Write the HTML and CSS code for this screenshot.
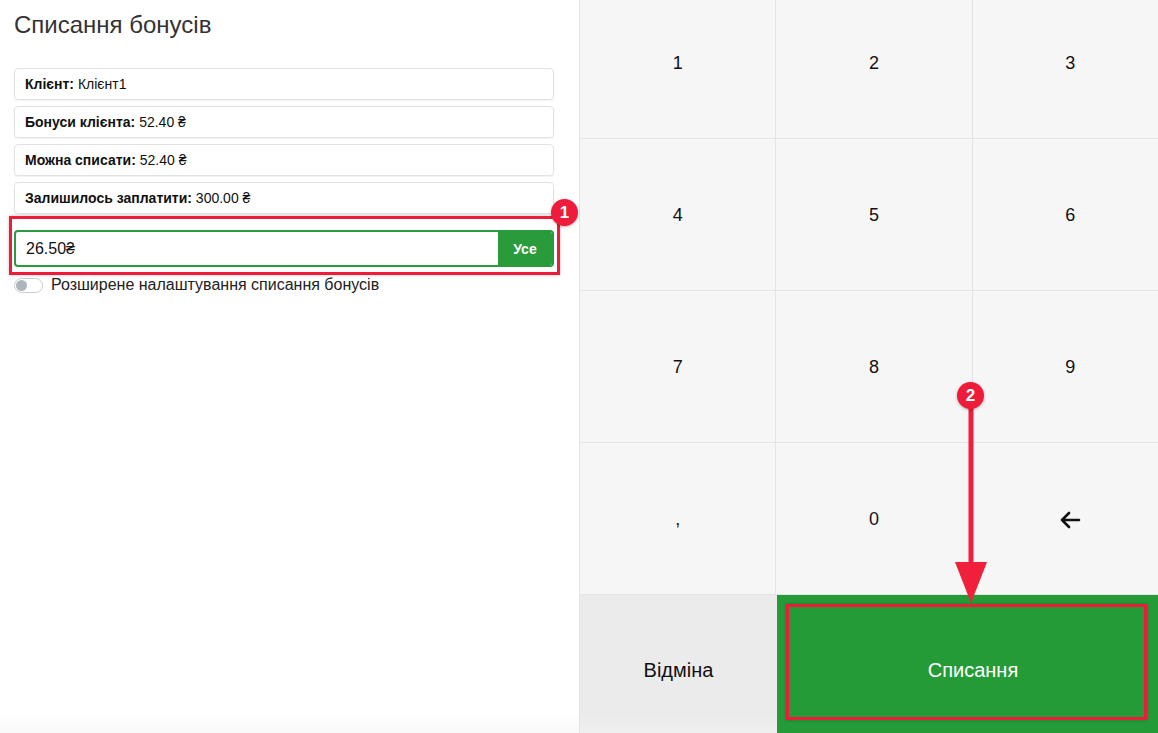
FILE: index.html
```html
<!DOCTYPE html>
<html lang="uk">
<head>
<meta charset="utf-8">
<title>Списання бонусів</title>
<link rel="stylesheet" href="styles.css">
</head>
<body>
<div class="app">
  <section class="left">
    <h1 class="title">Списання бонусів</h1>
    <div class="info-list">
      <div class="info"><b>Клієнт:</b> Клієнт1</div>
      <div class="info"><b>Бонуси клієнта:</b> 52.40 ₴</div>
      <div class="info"><b>Можна списати:</b> 52.40 ₴</div>
      <div class="info"><b>Залишилось заплатити:</b> 300.00 ₴</div>
    </div>
    <div class="input-group">
      <div class="input">26.50₴</div>
      <button class="all-btn">Усе</button>
    </div>
    <label class="switch-row">
      <span class="switch"><span class="knob"></span></span>
      <span class="switch-label">Розширене налаштування списання бонусів</span>
    </label>
  </section>
  <section class="right">
    <div class="keypad">
      <div class="key">1</div><div class="key">2</div><div class="key">3</div>
      <div class="key">4</div><div class="key">5</div><div class="key">6</div>
      <div class="key">7</div><div class="key">8</div><div class="key">9</div>
      <div class="key">,</div><div class="key">0</div>
      <div class="key"><svg width="22" height="18" viewBox="0 0 22 18"><path d="M20 9H3M10 2L3 9l7 7" fill="none" stroke="#111" stroke-width="2.6" stroke-linecap="round" stroke-linejoin="round"/></svg></div>
    </div>
    <div class="actions">
      <button class="cancel">Відміна</button>
      <button class="confirm">Списання</button>
    </div>
  </section>

  <div class="mark mark-input"></div>
  <div class="badge badge-1">1</div>
  <div class="mark mark-confirm"></div>
  <svg class="arrow" width="40" height="220" viewBox="0 0 40 220">
    <path d="M20 10V170" stroke="#f0203a" stroke-width="5" stroke-linecap="round"/>
    <path d="M4 166H36L20 207Z" fill="#f0203a"/>
  </svg>
  <div class="badge badge-2">2</div>
</div>
</body>
</html>
```
FILE: styles.css
```css
html, body {
  margin: 0;
  padding: 0;
  height: 100%;
  overflow: hidden;
  background: #fff;
  font-family: "Liberation Sans", Arial, Helvetica, sans-serif;
}

.app {
  position: relative;
  display: flex;
  width: 1158px;
  height: 733px;
  overflow: hidden;
}

.left {
  width: 540px;
  flex: none;
  padding: 12px 25px 0 14px;
  border-right: 1px solid #e4e4e4;
  background: linear-gradient(to bottom, #fff 0, #fff 715px, #f8f8f8 733px);
}

.title {
  margin: 0;
  font-size: 24px;
  line-height: 26px;
  font-weight: normal;
  color: #333;
}

.info-list {
  margin-top: 30px;
  display: flex;
  flex-direction: column;
  gap: 6px;
}

.info {
  height: 30px;
  line-height: 30px;
  padding: 0 10px;
  border: 1px solid #e2e2e2;
  border-radius: 4px;
  box-shadow: 0 1px 2px rgba(0,0,0,0.06);
  font-size: 14px;
  color: #111;
}

.info b {
  font-weight: bold;
}

.input-group {
  margin-top: 16px;
  display: flex;
  height: 37px;
  box-sizing: border-box;
  border: 2px solid #2a9b3b;
  border-radius: 4px;
  overflow: hidden;
}

.input {
  flex: 1;
  padding-left: 10px;
  line-height: 33px;
  font-size: 16px;
  color: #111;
}

.all-btn {
  width: 54px;
  border: 0;
  margin: 0;
  background: #2a9b3b;
  color: #fff;
  font-family: inherit;
  font-weight: bold;
  font-size: 14px;
}

.switch-row {
  margin-top: 9px;
  display: flex;
  align-items: center;
  gap: 8px;
}

.switch {
  width: 25px;
  height: 13px;
  border: 1px solid #c8ccd0;
  border-radius: 8px;
  background: #fff;
  display: flex;
  align-items: center;
  padding: 0 1px;
}

.knob {
  width: 11px;
  height: 11px;
  border-radius: 50%;
  background: #adb5bd;
}

.switch-label {
  font-size: 16px;
  color: #222;
}

.right {
  flex: none;
  width: 589px;
  display: flex;
  flex-direction: column;
}

.keypad {
  margin-top: -13px;
  display: grid;
  grid-template-columns: repeat(3, 1fr);
  grid-template-rows: repeat(4, 152px);
  background: #f7f6f7;
}

.key {
  display: flex;
  align-items: center;
  justify-content: center;
  padding-top: 2px;
  font-size: 18px;
  color: #111;
  border-right: 1px solid #e5e4e5;
  border-bottom: 1px solid #e5e4e5;
}

.actions {
  flex: 1;
  display: grid;
  grid-template-columns: 197px 1fr;
}

.actions button {
  border: 0;
  margin: 0;
  padding: 12px 0 0;
  font-family: inherit;
  font-size: 20px;
}

.cancel {
  background: linear-gradient(to bottom, #ebebeb 0, #ebebeb 120px, #f0f0f0 139px);
  color: #111;
}

.confirm {
  background: #249b36;
  color: #fff;
  border-left: 1px solid #e5e4e5;
}

/* annotation overlays */
.mark {
  position: absolute;
  border: 3px solid #ee1c3a;
  box-shadow: 0 0 3px rgba(0,0,0,0.25);
  box-sizing: border-box;
}

.mark-input {
  left: 9px;
  top: 216px;
  width: 551px;
  height: 59px;
}

.mark-confirm {
  left: 786px;
  top: 604px;
  width: 361px;
  height: 116px;
}

.badge {
  position: absolute;
  width: 27px;
  height: 27px;
  border-radius: 50%;
  background: #ee1c3a;
  color: #fff;
  font-weight: bold;
  font-size: 17px;
  line-height: 27px;
  text-align: center;
  box-shadow: 0 1px 3px rgba(0,0,0,0.3);
}

.badge-1 {
  left: 551px;
  top: 199px;
}

.badge-2 {
  left: 957px;
  top: 382px;
}

.arrow {
  position: absolute;
  left: 951px;
  top: 396px;
}
```
